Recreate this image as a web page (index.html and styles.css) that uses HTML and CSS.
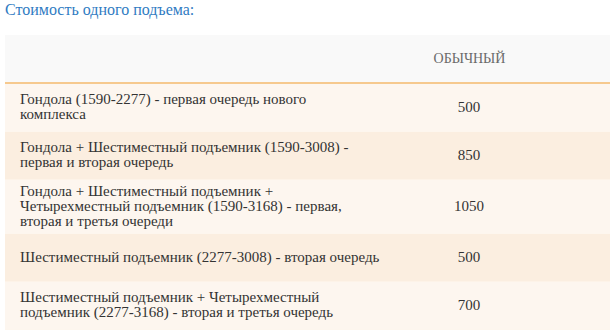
FILE: index.html
```html
<!DOCTYPE html>
<html lang="ru">
<head>
<meta charset="utf-8">
<link rel="stylesheet" href="styles.css">
</head>
<body>
<div class="page">
  <h3 class="title">Стоимость одного подъема:</h3>
  <table class="prices">
    <thead>
      <tr>
        <th class="name"></th>
        <th class="value">ОБЫЧНЫЙ</th>
      </tr>
    </thead>
    <tbody>
      <tr>
        <td class="name">Гондола (1590-2277) - первая очередь нового<br>комплекса</td>
        <td class="value">500</td>
      </tr>
      <tr>
        <td class="name">Гондола + Шестиместный подъемник (1590-3008) - первая и вторая очередь</td>
        <td class="value">850</td>
      </tr>
      <tr>
        <td class="name">Гондола + Шестиместный подъемник +<br>Четырехместный подъемник (1590-3168) - первая, вторая и третья очереди</td>
        <td class="value">1050</td>
      </tr>
      <tr>
        <td class="name">Шестиместный подъемник (2277-3008) - вторая очередь</td>
        <td class="value">500</td>
      </tr>
      <tr>
        <td class="name">Шестиместный подъемник + Четырехместный подъемник (2277-3168) - вторая и третья очередь</td>
        <td class="value">700</td>
      </tr>
    </tbody>
  </table>
</div>
</body>
</html>
```
FILE: styles.css
```css
html, body {
  margin: 0;
  padding: 0;
  background: #ffffff;
  font-family: "Liberation Serif", serif;
}
.page {
  padding-left: 5px;
  color: #333333;
}
.title {
  margin: 0;
  height: 35px;
  font-family: "Liberation Serif", serif;
  font-size: 16px;
  font-weight: normal;
  line-height: 20px;
  color: #2f7bc2;
}
.prices {
  width: 100%;
  border-collapse: collapse;
  font-family: "Liberation Serif", serif;
  font-size: 15px;
  line-height: 15px;
}
.prices thead tr {
  height: 48px;
  background: #f9f9f9;
  border-bottom: 2px solid #f6c98e;
}
.prices th {
  font-family: "Liberation Serif", serif;
  font-weight: normal;
  color: #6a6a6a;
  font-size: 14px;
  vertical-align: middle;
}
.prices td {
  font-family: "Liberation Serif", serif;
  vertical-align: middle;
  padding: 4px 0;
}
.prices tbody tr {
  height: 48px;
  border-bottom: 1px solid #fdf6ee;
}
.prices tbody tr:nth-child(odd) {
  background: #fdf6ef;
}
.prices tbody tr:nth-child(even) {
  background: #fbeee0;
  border-bottom-color: #fdf3e8;
}
.prices .name {
  width: 364px;
  padding-left: 15px;
  padding-right: 15px;
  text-align: left;
}
.prices .value {
  text-align: center;
  padding-right: 71px;
}
```
